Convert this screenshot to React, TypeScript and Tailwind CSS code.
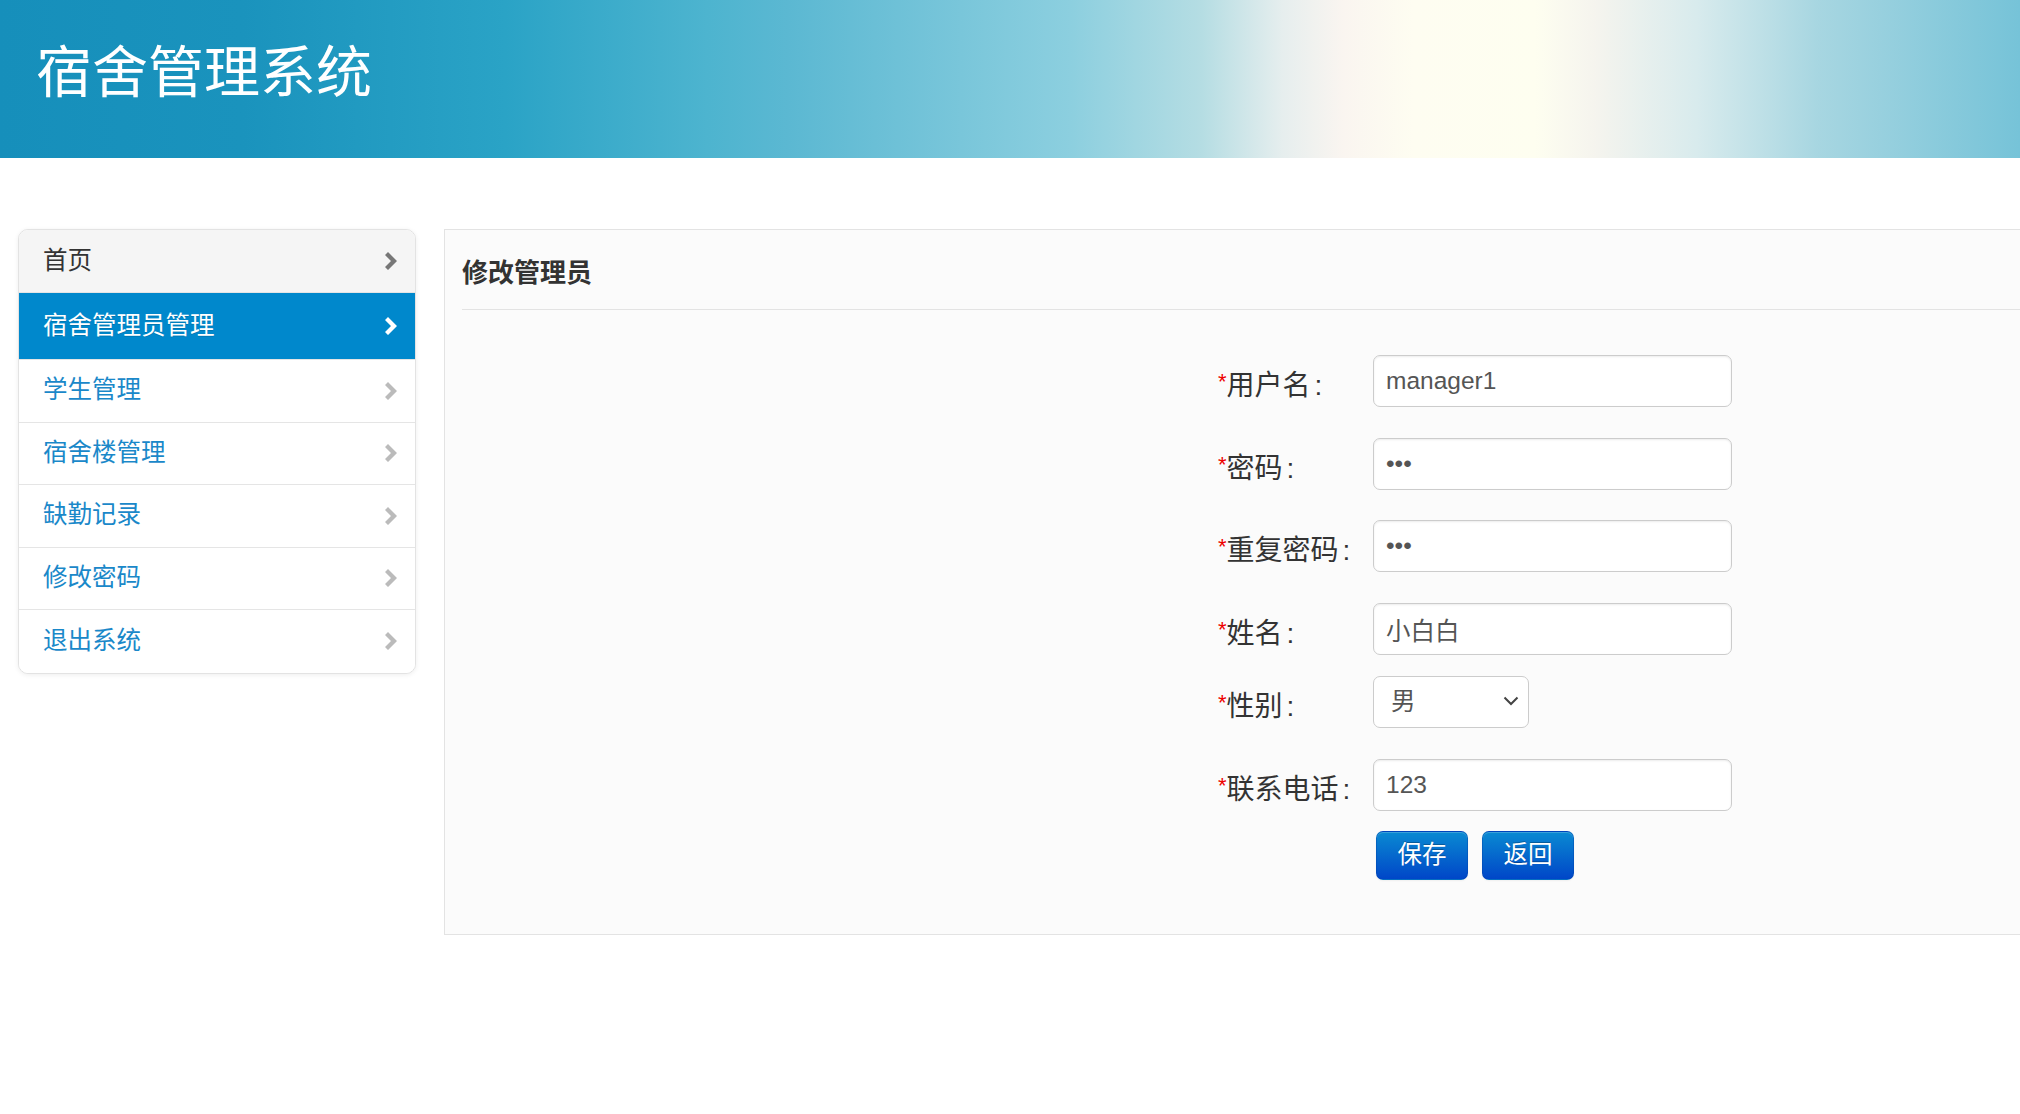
import { useState } from 'react'

const menu = ['首页', '宿舍管理员管理', '学生管理', '宿舍楼管理', '缺勤记录', '修改密码', '退出系统']

function Chevron({ color }: { color: string }) {
  return (
    <svg width="12" height="18" viewBox="0 0 12 18">
      <polygon points="0,3 3,0 12,9 3,18 0,15 6,9" fill={color} />
    </svg>
  )
}

function Label({ text }: { text: string }) {
  return (
    <label className="w-[155px] shrink-0 text-[28px] text-[#333] translate-y-[5px] whitespace-nowrap">
      <span className="text-[#ee0000] text-[22px] align-top">*</span>
      {text}
      <span className="ml-[4px]">:</span>
    </label>
  )
}

const inputCls =
  'w-[359px] h-[52px] rounded-[7px] border border-[#cccccc] bg-white px-[12px] text-[24.5px] text-[#555] shadow-[inset_0_1px_2px_rgba(0,0,0,0.075)] outline-none'

export default function App() {
  const [active] = useState(1)
  const fields = [
    { label: '用户名', value: 'manager1', type: 'text', mt: 'mt-0' },
    { label: '密码', value: '123', type: 'password', mt: 'mt-[31px]' },
    { label: '重复密码', value: '123', type: 'password', mt: 'mt-[30px]' },
    { label: '姓名', value: '小白白', type: 'text', mt: 'mt-[31px]' },
  ]

  return (
    <div
      className="min-h-[1114px] w-[2020px] bg-white"
      style={{ fontFamily: '"Liberation Sans", "Noto Sans CJK SC", sans-serif' }}
    >
      {/* header */}
      <div className="h-[158px] bg-[linear-gradient(90deg,#168fbb_0%,#1a93bd_12%,#2aa3c6_25%,#4db4cf_35%,#5bb8d2_39%,#8ccfdf_53%,#b5dde3_59.5%,#e6eeee_63.5%,#faf5f0_66.5%,#fefdf1_70%,#fefef0_76%,#f5f4ee_79%,#d8ebed_84%,#a7d6e1_90%,#76c3d8_100%)]">
        <h1 className="pl-[36px] pt-[45px] text-[56px] leading-none font-normal text-white">宿舍管理系统</h1>
      </div>

      <div className="flex gap-[28px] pl-[18px] pt-[71px]">
        {/* sidebar */}
        <ul className="w-[398px] shrink-0 self-start rounded-[10px] border border-[#e3e3e3] bg-white shadow-[0_1px_5px_rgba(0,0,0,0.07)] overflow-hidden">
          {menu.map((item, i) => {
            const isActive = i === active
            const isFirst = i === 0
            return (
              <li
                key={item}
                className={
                  'flex items-center justify-between pl-[24px] pr-[18px] text-[24.5px] ' +
                  (i < menu.length - 1 ? 'border-b border-[#e5e5e5] ' : '') +
                  (isActive
                    ? 'h-[67px] bg-[#0088cc] text-white [text-shadow:0_1px_0_rgba(0,0,0,0.15)]'
                    : isFirst
                    ? 'h-[63px] bg-[#f5f5f5] text-[#333]'
                    : 'h-[62.5px] bg-white text-[#1a88c9]')
                }
              >
                <span>{item}</span>
                <Chevron color={isActive ? '#ffffff' : isFirst ? '#777777' : '#bbbbbb'} />
              </li>
            )
          })}
        </ul>

        {/* main panel */}
        <div className="flex-1 h-[706px] border border-r-0 border-[#e3e3e3] bg-[#fbfbfb] pl-[17px] pt-[26px]">
          <h2 className="h-[34px] text-[26px] leading-[34px] font-bold text-[#333]">修改管理员</h2>
          <div className="mt-[19px] border-t border-[#e3e3e3]" />

          <form className="pl-[756px] pt-[45px]">
            {fields.map((f) => (
              <div key={f.label} className={'flex items-center ' + f.mt}>
                <Label text={f.label} />
                <input className={inputCls} type={f.type} defaultValue={f.value} readOnly />
              </div>
            ))}

            <div className="mt-[21px] flex items-center">
              <Label text="性别" />
              <div className="relative">
                <select
                  className="h-[52px] w-[156px] appearance-none rounded-[7px] border border-[#cccccc] bg-white pl-[17px] text-[24.5px] text-[#555] outline-none"
                  defaultValue="男"
                >
                  <option>男</option>
                  <option>女</option>
                </select>
                <svg
                  className="pointer-events-none absolute right-[10px] top-[19px]"
                  width="16"
                  height="12"
                  viewBox="0 0 16 12"
                >
                  <polyline points="1.5,2.5 8,9 14.5,2.5" fill="none" stroke="#444" strokeWidth="2" />
                </svg>
              </div>
            </div>

            <div className="mt-[31px] flex items-center">
              <Label text="联系电话" />
              <input className={inputCls} type="text" defaultValue="123" readOnly />
            </div>

            <div className="ml-[158px] mt-[20px] flex gap-[14px]">
              {['保存', '返回'].map((b) => (
                <button
                  key={b}
                  type="button"
                  className="h-[49px] w-[92px] rounded-[7px] border border-[#0044aa]/40 bg-[linear-gradient(to_bottom,#0a8ad2,#0046c8)] text-[24.5px] text-white [text-shadow:0_-1px_0_rgba(0,0,0,0.25)] shadow-[inset_0_1px_0_rgba(255,255,255,0.2),0_1px_2px_rgba(0,0,0,0.05)]"
                >
                  {b}
                </button>
              ))}
            </div>
          </form>
        </div>
      </div>
    </div>
  )
}
